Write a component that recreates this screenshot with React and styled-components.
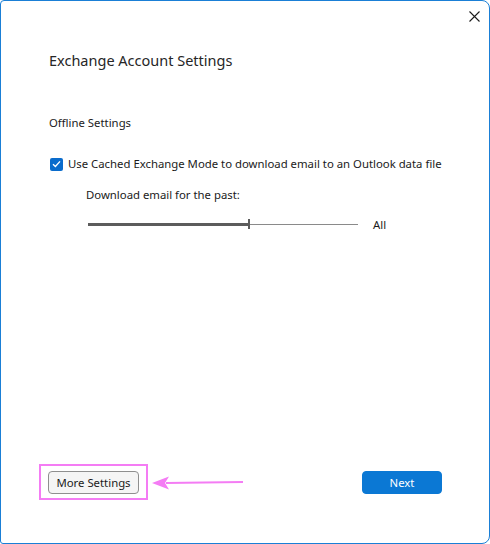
import React from "react";
import styled, { createGlobalStyle } from "styled-components";

const Global = createGlobalStyle`
  html, body { margin: 0; padding: 0; background: #ffffff; }
  body { font-family: "Segoe UI", "Noto Sans", "Liberation Sans", sans-serif; }
  * { box-sizing: border-box; }
`;

const Window = styled.div`
  width: 490px;
  height: 544px;
  border: 1px solid #1a7fd6;
  border-radius: 4px 8px 8px 3px;
  background: #ffffff;
  display: flex;
  flex-direction: column;
  color: #1b1b1b;
`;

const TitleBar = styled.div`
  height: 30px;
  display: flex;
  justify-content: flex-end;
  align-items: flex-start;
  padding: 9px 9px 0 0;
`;

const CloseButton = styled.button`
  width: 12px;
  height: 12px;
  padding: 0;
  border: none;
  background: transparent;
  display: flex;
  align-items: center;
  justify-content: center;
`;

const Body = styled.div`
  flex: 1;
  display: flex;
  flex-direction: column;
  padding: 19px 0 0 48px;
`;

const Title = styled.h1`
  margin: 0;
  font-size: 14.5px;
  font-weight: 400;
  line-height: 20px;
  color: #262626;
`;

const Section = styled.div`
  margin-top: 45px;
  font-size: 11.35px;
  line-height: 16px;
`;

const CheckRow = styled.label`
  margin-top: 25px;
  display: flex;
  align-items: center;
  gap: 5px;
  font-size: 11.35px;
  line-height: 16px;
  margin-left: 1px;
`;

const CheckBox = styled.span`
  width: 13px;
  height: 13px;
  border-radius: 2px;
  background: #0a6ccc;
  display: flex;
  align-items: center;
  justify-content: center;
`;

const SubBlock = styled.div`
  margin-left: 37px;
  display: flex;
  flex-direction: column;
`;

const SubLabel = styled.div`
  margin-top: 15px;
  font-size: 11.35px;
  line-height: 16px;
`;

const SliderRow = styled.div`
  margin-top: 13px;
  margin-left: 2px;
  display: flex;
  align-items: center;
  height: 16px;
`;

const Track = styled.div`
  width: 270px;
  height: 10px;
  display: flex;
  align-items: center;
`;

const Filled = styled.div`
  height: 3px;
  background: #5c5c5c;
`;

const Thumb = styled.div`
  width: 2px;
  height: 10px;
  background: #5c5c5c;
`;

const Rest = styled.div`
  flex: 1;
  height: 1px;
  background: #8a8a8a;
`;

const SliderValue = styled.span`
  margin-left: 15px;
  font-size: 11.35px;
`;

const Footer = styled.div`
  height: 80px;
  display: flex;
  align-items: center;
  justify-content: space-between;
  padding: 1px 47px 43px 38px;
`;

const Annotated = styled.div`
  display: flex;
  align-items: center;
`;

const Highlight = styled.div`
  border: 2px solid #f47cf4;
  padding: 5px 7px 4px 7px;
  display: flex;
`;

const Button = styled.button`
  height: 23px;
  font-family: inherit;
  font-size: 11.35px;
  border-radius: 4px;
  padding: 0;
  display: flex;
  align-items: center;
  justify-content: center;
  width: ${(p) => p.$width}px;
  background: ${(p) => (p.$primary ? "#0b78d4" : "#f5f5f5")};
  color: ${(p) => (p.$primary ? "#ffffff" : "#1b1b1b")};
  border: 1px solid ${(p) => (p.$primary ? "#0b78d4" : "#8f8f8f")};
`;

const Arrow = styled.svg`
  margin-left: 4px;
  margin-top: 2px;
  display: block;
`;

export default function App() {
  return (
    <>
      <Global />
      <Window>
        <TitleBar>
          <CloseButton aria-label="Close">
            <svg width="11" height="11" viewBox="0 0 11 11">
              <path d="M0.5 0.5 L10.5 10.5 M10.5 0.5 L0.5 10.5" stroke="#1b1b1b" strokeWidth="1.1" />
            </svg>
          </CloseButton>
        </TitleBar>
        <Body>
          <Title>Exchange Account Settings</Title>
          <Section>Offline Settings</Section>
          <CheckRow>
            <CheckBox>
              <svg width="9" height="8" viewBox="0 0 9 8">
                <path d="M1 4.2 L3.4 6.4 L8 1.4" fill="none" stroke="#ffffff" strokeWidth="1.4" />
              </svg>
            </CheckBox>
            Use Cached Exchange Mode to download email to an Outlook data file
          </CheckRow>
          <SubBlock>
            <SubLabel>Download email for the past:</SubLabel>
            <SliderRow>
              <Track>
                <Filled style={{ width: "160px" }} />
                <Thumb />
                <Rest />
              </Track>
              <SliderValue>All</SliderValue>
            </SliderRow>
          </SubBlock>
        </Body>
        <Footer>
          <Annotated>
            <Highlight>
              <Button $width={91}>More Settings</Button>
            </Highlight>
            <Arrow width="92" height="16" viewBox="0 0 92 16">
              <path d="M14 8 L91 7" stroke="#f47cf4" strokeWidth="2" />
              <path d="M0 8 L17 1.5 L13 8 L17 14.5 Z" fill="#f47cf4" />
            </Arrow>
          </Annotated>
          <Button $primary $width={80}>Next</Button>
        </Footer>
      </Window>
    </>
  );
}
